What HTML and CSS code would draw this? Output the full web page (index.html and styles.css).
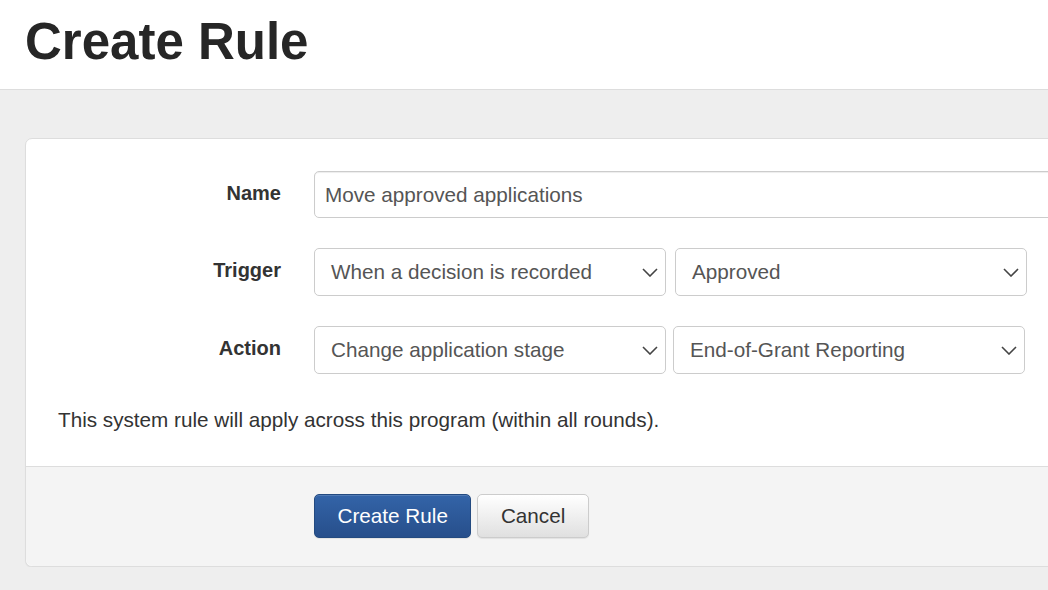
FILE: index.html
```html
<!DOCTYPE html>
<html lang="en">
<head>
    <meta charset="UTF-8">
    <meta name="viewport" content="width=device-width, initial-scale=1.0">
    <title>Create Rule</title>
    <link rel="stylesheet" href="styles.css">
</head>
<body>
    <div class="page-header">
        <h1>Create Rule</h1>
    </div>

    <div class="page-body">
        <div class="panel">
            <div class="panel-body">
                <div class="form-row">
                    <label class="form-label">Name</label>
                    <div class="form-field">
                        <input type="text" class="text-input" value="Move approved applications">
                    </div>
                </div>

                <div class="form-row">
                    <label class="form-label">Trigger</label>
                    <div class="form-field field-pair">
                        <div class="select-box">
                            <span>When a decision is recorded</span>
                            <svg class="chevron" width="16" height="9" viewBox="0 0 16 9"><path d="M1 1 L8 8 L15 1" fill="none" stroke="#444" stroke-width="1.6"/></svg>
                        </div>
                        <div class="select-box">
                            <span>Approved</span>
                            <svg class="chevron" width="16" height="9" viewBox="0 0 16 9"><path d="M1 1 L8 8 L15 1" fill="none" stroke="#444" stroke-width="1.6"/></svg>
                        </div>
                    </div>
                </div>

                <div class="form-row">
                    <label class="form-label">Action</label>
                    <div class="form-field field-pair tight">
                        <div class="select-box">
                            <span>Change application stage</span>
                            <svg class="chevron" width="16" height="9" viewBox="0 0 16 9"><path d="M1 1 L8 8 L15 1" fill="none" stroke="#444" stroke-width="1.6"/></svg>
                        </div>
                        <div class="select-box">
                            <span>End-of-Grant Reporting</span>
                            <svg class="chevron" width="16" height="9" viewBox="0 0 16 9"><path d="M1 1 L8 8 L15 1" fill="none" stroke="#444" stroke-width="1.6"/></svg>
                        </div>
                    </div>
                </div>

                <p class="help-text">This system rule will apply across this program (within all rounds).</p>
            </div>

            <div class="panel-footer">
                <button class="btn btn-primary">Create Rule</button>
                <button class="btn btn-default">Cancel</button>
            </div>
        </div>
    </div>
</body>
</html>
```

FILE: styles.css
```css
html, body {
    overflow: hidden;
}

body {
    font-family: "Liberation Sans", Arial, sans-serif;
    font-size: 20.7px;
    color: #333;
    background-color: #eee;
    margin: 0;
    padding: 0;
}

.page-header {
    background-color: #fff;
    border-bottom: 1px solid #ddd;
    height: 89px;
    padding-left: 25px;
}

.page-header h1 {
    margin: 0;
    padding-top: 12px;
    font-size: 51px;
    line-height: 60px;
    font-weight: bold;
    color: #262626;
}

.page-body {
    padding: 48px 0 0 25px;
}

.panel {
    width: 1100px;
    background-color: #fff;
    border: 1px solid #ddd;
    border-radius: 7px;
    box-shadow: 0 1px 1px rgba(0, 0, 0, 0.05);
}

.panel-body {
    padding: 32px 0 0 0;
}

.form-row {
    display: flex;
    align-items: center;
    margin-bottom: 30px;
}

.form-row.short-gap {
    margin-bottom: 29px;
}

.form-label {
    width: 255px;
    text-align: right;
    font-size: 20px;
    font-weight: bold;
    margin-right: 33px;
    padding-bottom: 3px;
}

.form-field {
    flex-grow: 1;
}

.field-pair {
    display: flex;
    gap: 9px;
}

.field-pair.tight {
    gap: 7px;
}

.text-input {
    box-sizing: border-box;
    width: 100%;
    height: 47px;
    padding: 0 10px;
    font-family: inherit;
    font-size: 20.7px;
    color: #555;
    border: 1px solid #ccc;
    border-radius: 5px;
    box-shadow: inset 0 1px 1px rgba(0, 0, 0, 0.075);
}

.select-box {
    box-sizing: border-box;
    width: 352px;
    height: 48px;
    display: flex;
    align-items: center;
    justify-content: space-between;
    padding: 0 7px 0 16px;
    color: #555;
    border: 1px solid #ccc;
    border-radius: 5px;
    background-color: #fff;
}

.chevron {
    display: block;
}

.help-text {
    margin: 0 0 0 32px;
    padding: 2px 0 32px 0;
    line-height: 28px;
}

.panel-footer {
    background-color: #f4f4f4;
    border-top: 1px solid #ddd;
    border-bottom-left-radius: 7px;
    border-bottom-right-radius: 7px;
    padding: 27px 0 28px 288px;
    display: flex;
    gap: 6px;
}

.btn {
    height: 44px;
    font-family: inherit;
    font-size: 20.7px;
    border-radius: 5px;
    padding: 0 22.5px;
    cursor: pointer;
}

.btn-primary {
    color: #fff;
    background-image: linear-gradient(to bottom, #3364a8 0, #274f8b 100%);
    border: 1px solid #234a80;
    box-shadow: inset 0 1px 0 rgba(255, 255, 255, 0.15), 0 1px 1px rgba(0, 0, 0, 0.075);
}

.btn-default {
    color: #333;
    background-image: linear-gradient(to bottom, #fff 0, #e0e0e0 100%);
    border: 1px solid #ccc;
    box-shadow: inset 0 1px 0 rgba(255, 255, 255, 0.15), 0 1px 1px rgba(0, 0, 0, 0.075);
}
```
